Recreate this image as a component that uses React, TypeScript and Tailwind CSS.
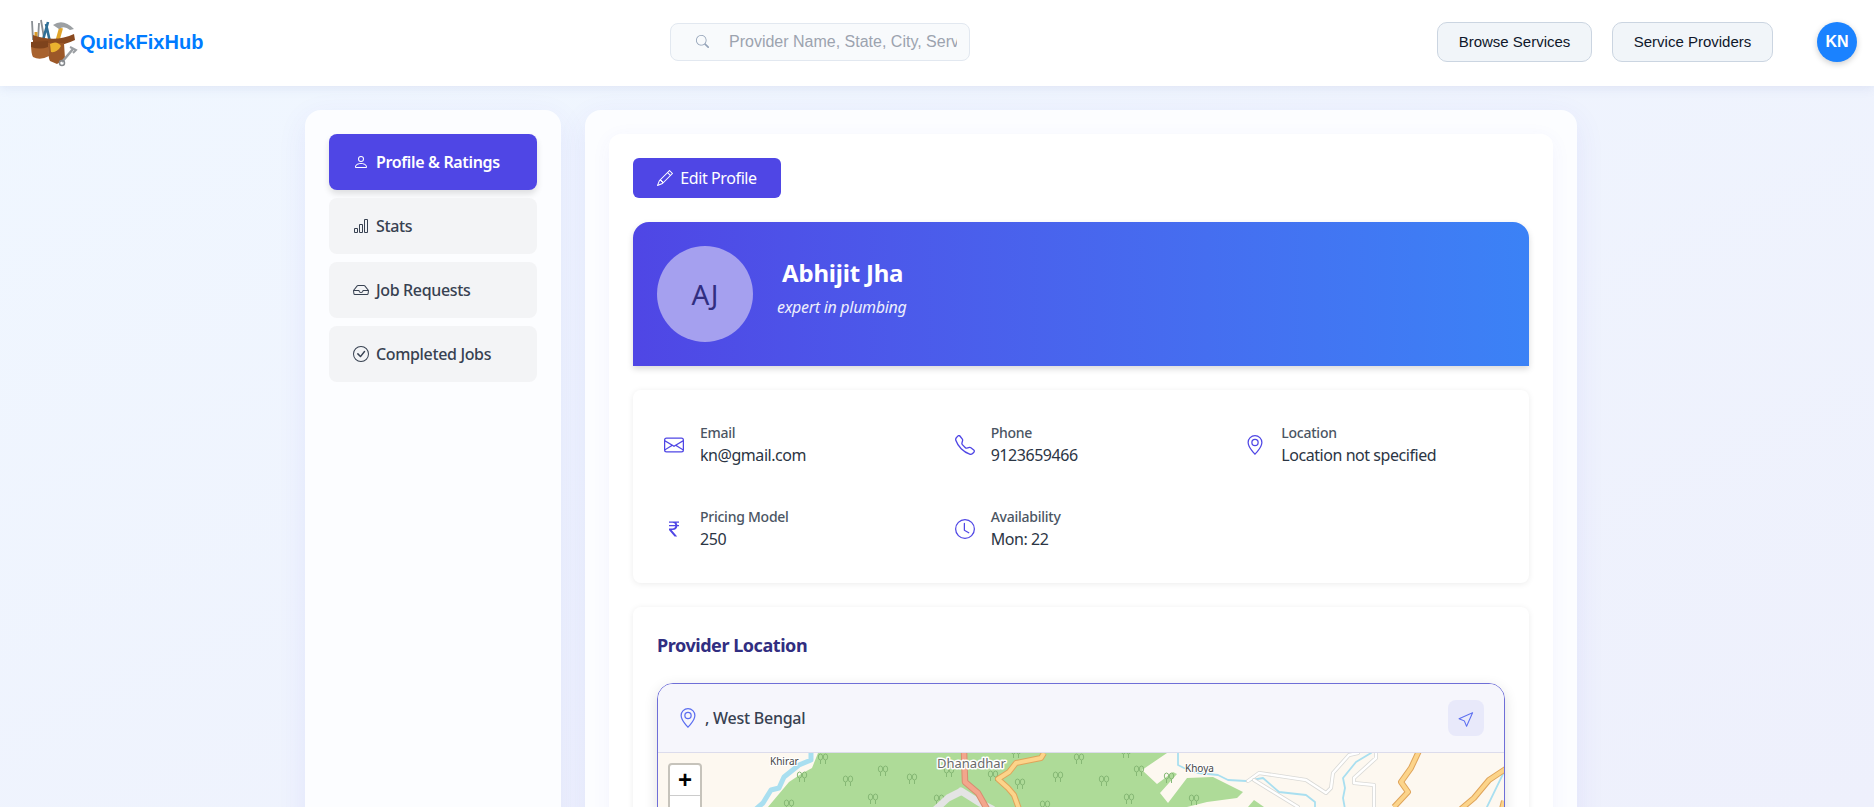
import {
  BsBarChart,
  BsCheckCircle,
  BsClock,
  BsCurrencyRupee,
  BsCursor,
  BsEnvelope,
  BsGeoAlt,
  BsInbox,
  BsPencil,
  BsPerson,
  BsSearch,
  BsTelephone,
} from "react-icons/bs";

const tabs = [
  { label: "Profile & Ratings", icon: BsPerson, active: true },
  { label: "Stats", icon: BsBarChart, active: false },
  { label: "Job Requests", icon: BsInbox, active: false },
  { label: "Completed Jobs", icon: BsCheckCircle, active: false },
];

const details = [
  { label: "Email", value: "kn@gmail.com", icon: BsEnvelope },
  { label: "Phone", value: "9123659466", icon: BsTelephone },
  { label: "Location", value: "Location not specified", icon: BsGeoAlt },
  { label: "Pricing Model", value: "250", icon: BsCurrencyRupee },
  { label: "Availability", value: "Mon: 22", icon: BsClock },
];

function Logo() {
  return (
    <svg width="60" height="60" viewBox="0 0 60 60" className="shrink-0 -ml-[11px] mb-[4px]">
      {/* tools */}
      <path d="M13 30 L12 11 M18 30 L19 13 M24 28 L21 10" stroke="#8a8f94" strokeWidth="1.8" fill="none" />
      <path d="M23 30 L28 12 M30 32 L26 14" stroke="#2f6f96" strokeWidth="2.6" fill="none" />
      <path d="M16 22 L16 33" stroke="#d79a2b" strokeWidth="3" />
      <path d="M36 36 L41 18" stroke="#e2a52a" strokeWidth="4" />
      <path d="M33 15 Q43 8 54 19 L50 20 Q44 15 39 19 Z" fill="#9ca0a3" />
      {/* belt */}
      <path d="M13 25 Q35 33 54 24 L55 30 Q35 40 13 32 Z" fill="#8a4a1f" />
      {/* pouches */}
      <path d="M11 33 L28 32 L29 46 Q20 51 13 47 Q11 44 11 33 Z" fill="#a8622e" />
      <path d="M28 33 L44 33 L45 49 L37 54 L30 51 Q28 48 28 33 Z" fill="#9c5828" />
      <path d="M11 32 L28 31 L28 37 Q20 40 11 37 Z" fill="#7e431c" />
      <path d="M30 34 Q37 30 41 36 Q37 43 31 42 Z" fill="#eab22f" />
      {/* wrench */}
      <path d="M42 52 L53 39" stroke="#9a9ea2" strokeWidth="2.5" />
      <circle cx="42" cy="53" r="2.5" fill="none" stroke="#85898d" strokeWidth="1.5" />
      <path d="M50 37 L56 40 L53 43" stroke="#9a9ea2" strokeWidth="2" fill="none" />
    </svg>
  );
}

const trees: [number, number][] = [
  [165, 6], [144, 24], [190, 28], [225, 18], [254, 26], [215, 46], [281, 47], [131, 52],
  [291, 19], [335, 23], [362, 31], [421, 6], [400, 24], [446, 28], [481, 18], [471, 46],
  [387, 53], [511, 25], [536, 47], [358, 0], [468, 0],
];

function MapView() {
  return (
    <svg width="846" height="100" viewBox="0 0 846 100" className="block">
      <rect width="846" height="100" fill="#fdf8f0" />
      {/* forest */}
      <path
        d="M160 0 L154 15 L143 21 L131 29 L110 54 L100 100 L529 100 L529 54 L549 49 L579 45 L585 39 L555 24 L529 25 L510 50 L502 40 L519 21 L515 19 L499 31 L484 17 L509 0 Z"
        fill="#aedb98"
      />
      <path d="M596 47 L606 54 L590 54 Z" fill="#aedb98" />
      {/* trees */}
      {trees.map(([x, y], i) => (
        <g key={i} transform={`translate(${x - 5} ${y - 5})`} fill="none" stroke="#86b875" strokeWidth="1">
          <ellipse cx="2.5" cy="3" rx="2.2" ry="3" />
          <path d="M2.5 6 V10" />
          <ellipse cx="7.5" cy="3" rx="2.2" ry="3" />
          <path d="M7.5 6 V10" />
        </g>
      ))}
      {/* rivers */}
      <g fill="none" stroke="#a9dff0" strokeLinejoin="round" strokeLinecap="round">
        <path d="M153 -2 L153 7 L141 12 L126 24 L121 35 L113 37 L105 50 L98 56" strokeWidth="5" />
        <path d="M520 0 L520 12 L526 15 L540 20 L560 22 L570 27 L588 28 L605 25 L621 39 L648 42 L657 49 L657 56" strokeWidth="1.8" />
        <path d="M713 0 L698 9 L685 25 L687 35 L685 45 L687 56" strokeWidth="1.8" />
        <path d="M846 19 L828 56" strokeWidth="1.8" />
      </g>
      {/* minor roads */}
      <g fill="none" strokeLinejoin="round" strokeLinecap="round">
        <path d="M590 28 L601 20 L615 22 L648 27 L668 40 L673 35 L675 20 L691 2 L700 0" stroke="#d9d9d6" strokeWidth="4" />
        <path d="M590 28 L601 20 L615 22 L648 27 L668 40 L673 35 L675 20 L691 2 L700 0" stroke="#ffffff" strokeWidth="2.4" />
        <path d="M718 0 L718 5 L696 25 L696 30 L716 32 L716 56" stroke="#d9d9d6" strokeWidth="4" />
        <path d="M718 0 L718 5 L696 25 L696 30 L716 32 L716 56" stroke="#ffffff" strokeWidth="2.4" />
        <path d="M596 27 L640 54" stroke="#d9d9d6" strokeWidth="4" />
        <path d="M596 27 L640 54" stroke="#ffffff" strokeWidth="2.4" />
        <path d="M302 39 L290 45 L278 56" stroke="#e4e4e4" strokeWidth="7" />
        <path d="M303 38 L322 50 L334 56" stroke="#e4e4e4" strokeWidth="7" />
      </g>
      {/* main roads */}
      <g fill="none" strokeLinejoin="round">
        <path d="M306 -2 L307 29 L320 40 L329 56" stroke="#d88d70" strokeWidth="6.5" />
        <path d="M306 -2 L307 29 L320 40 L329 56" stroke="#f3a68c" strokeWidth="4.5" />
        <g stroke="#dfa45a" strokeWidth="6">
          <path d="M386 0 L383 5 L358 10 L351 19 L340 26 L350 35 L356 42 L361 56" />
          <path d="M761 -2 L753 15 L743 29 L750 39 L736 54" />
          <path d="M849 15 L831 27 L816 45 L803 56" />
          <path d="M846 48 L844 56" />
        </g>
        <g stroke="#fcd48a" strokeWidth="4">
          <path d="M386 0 L383 5 L358 10 L351 19 L340 26 L350 35 L356 42 L361 56" />
          <path d="M761 -2 L753 15 L743 29 L750 39 L736 54" />
          <path d="M849 15 L831 27 L816 45 L803 56" />
          <path d="M846 48 L844 56" />
        </g>
      </g>
      {/* labels */}
      <g fontFamily="'Noto Sans', sans-serif" paintOrder="stroke" stroke="#ffffff" strokeLinejoin="round">
        <text x="112" y="12" fontSize="10" fill="#444444" strokeWidth="2">Khirar</text>
        <text x="279" y="15" fontSize="13" fill="#6a6a6a" strokeWidth="3">Dhanadhar</text>
        <text x="527" y="19" fontSize="10" fill="#444444" strokeWidth="2">Khoya</text>
      </g>
    </svg>
  );
}

export default function App() {
  return (
    <div className="h-screen overflow-hidden bg-gradient-to-br from-[#f0f7ff] to-[#eef0fc] font-['Noto_Sans',sans-serif]">
      {/* Navbar */}
      <header className="h-[86px] pb-[2px] bg-white shadow-[0_2px_10px_rgba(100,116,180,0.12)] flex items-center pl-[31px] pr-[17px] font-['Liberation_Sans',sans-serif] relative">
        <div className="w-[639px] flex items-center">
          <Logo />
          <span className="text-[20px] font-bold text-[#007bff]">QuickFixHub</span>
        </div>

        <div className="w-[300px] h-[38px] relative">
          <BsSearch className="absolute left-[26px] top-[12px] w-[13px] h-[13px] text-[#94a3b8]" />
          <input
            readOnly
            placeholder="Provider Name, State, City, Service"
            className="w-full h-full rounded-lg border border-[#e2e8f0] bg-[#f8fafc] pl-[58px] pr-[12px] text-[16px] placeholder:text-[#9ca3af] outline-none"
          />
        </div>

        <div className="ml-auto flex items-center gap-5">
          <button className="w-[155px] h-10 rounded-[10px] border border-[#cbd5e1] bg-[#f1f5f9] text-[15px] text-[#0f172a]">
            Browse Services
          </button>
          <button className="w-[161px] h-10 rounded-[10px] border border-[#cbd5e1] bg-[#f1f5f9] text-[15px] text-[#0f172a]">
            Service Providers
          </button>
        </div>
        <div className="ml-[44px] w-10 h-10 rounded-full bg-[#1a82ff] text-white font-bold text-[16px] flex items-center justify-center shadow-[0_2px_6px_rgba(0,0,0,0.2)]">
          KN
        </div>
      </header>

      {/* Page body */}
      <div className="ml-[305px] w-[1270px] pt-6 flex gap-6 items-stretch">
        {/* Sidebar */}
        <aside className="w-[256px] h-[800px] shrink-0 rounded-2xl bg-[#fcfdff] p-6 shadow-[0_8px_30px_rgba(79,70,229,0.08)] flex flex-col gap-2">
          {tabs.map((tab) => {
            const Icon = tab.icon;
            return (
              <div
                key={tab.label}
                className={
                  tab.active
                    ? "h-14 rounded-lg bg-[#4f46e5] text-white font-semibold flex items-center gap-[7px] px-6 shadow-[0_4px_6px_rgba(0,0,0,0.12)]"
                    : "h-14 rounded-lg bg-[#f3f4f6] text-[#374151] font-medium flex items-center gap-[7px] px-6"
                }
              >
                <Icon className="w-4 h-4 shrink-0" />
                <span className="text-[16px] tracking-[-0.35px]">{tab.label}</span>
              </div>
            );
          })}
        </aside>

        {/* Main */}
        <main className="flex-1 h-[800px] rounded-2xl bg-[#fcfdff] p-6 shadow-[0_8px_30px_rgba(79,70,229,0.08)]">
          <div className="rounded-xl bg-white p-6 shadow-[0_4px_20px_rgba(79,70,229,0.05)]">
            <button className="w-[148px] h-10 rounded-md bg-[#4f46e5] text-white text-[16px] tracking-[-0.4px] flex items-center justify-center gap-[7px]">
              <BsPencil className="w-4 h-4" />
              Edit Profile
            </button>

            {/* Banner */}
            <div className="mt-6 h-[144px] rounded-t-2xl bg-gradient-to-r from-[#4f46e5] to-[#3b82f6] flex items-center gap-6 px-6 shadow-[0_3px_6px_rgba(0,0,0,0.15)]">
              <div className="w-24 h-24 rounded-full bg-[#a5a0ef] text-[#312e81] text-[28px] flex items-center justify-center">
                AJ
              </div>
              <div className="text-white mb-3">
                <h1 className="ml-[5px] text-[24px] tracking-[-0.2px] font-bold leading-[32px]">Abhijit Jha</h1>
                <p className="mt-[6px] text-[16px] tracking-[-0.3px] leading-[24px] italic opacity-90">expert in plumbing</p>
              </div>
            </div>

            {/* Details */}
            <div className="mt-6 h-[193px] rounded-lg bg-white px-6 pt-[30px] shadow-[0_1px_6px_rgba(0,0,0,0.08)] grid grid-cols-3 gap-x-6 content-start gap-y-[34px]">
              {details.map((d) => {
                const Icon = d.icon;
                return (
                  <div key={d.label} className="h-[50px] flex items-center gap-[9px]">
                    <div className="w-[34px] flex justify-center text-[#4f46e5]">
                      <Icon className="w-5 h-5" />
                    </div>
                    <div>
                      <div className="text-[14px] tracking-[-0.25px] leading-[20px] font-medium text-[#4b5563]">{d.label}</div>
                      <div className="text-[16px] tracking-[-0.45px] leading-[24px] text-[#2b3544]">{d.value}</div>
                    </div>
                  </div>
                );
              })}
            </div>

            {/* Location */}
            <div className="mt-6 rounded-lg bg-white p-6 shadow-[0_1px_6px_rgba(0,0,0,0.08)]">
              <h2 className="text-[18px] tracking-[-0.45px] font-bold text-[#312e81] leading-[28px]">Provider Location</h2>
              <div className="mt-6 rounded-2xl border border-[#6f6fd8] overflow-hidden shadow-[0_4px_14px_rgba(0,0,0,0.12)] relative">
                <div className="h-[69px] bg-[#f6f6fc] border-b border-[#dcdcec] flex items-center px-5 gap-[7px]">
                  <BsGeoAlt className="w-5 h-5 text-[#5b6ef0]" />
                  <span className="text-[16px] tracking-[-0.25px] font-medium text-[#374151]">, West Bengal</span>
                  <div className="ml-auto w-9 h-9 rounded-lg bg-[#e8e9fa] flex items-center justify-center text-[#5b6ef0]">
                    <BsCursor className="w-[17px] h-[17px]" />
                  </div>
                </div>
                <MapView />
                {/* Leaflet zoom control */}
                <div className="absolute left-[10px] top-[79px] w-[34px] h-[66px] rounded border-2 border-[#c6c3bb] bg-white">
                  <div className="h-[31px] border-b border-[#cccccc] flex items-center justify-center text-[24px] font-bold text-black font-['Liberation_Sans',sans-serif]">
                    +
                  </div>
                </div>
              </div>
            </div>
          </div>
        </main>
      </div>
    </div>
  );
}
